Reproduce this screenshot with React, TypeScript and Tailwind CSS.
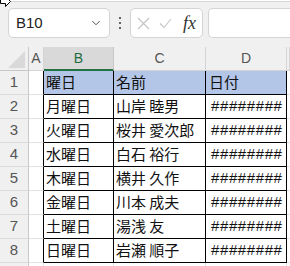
import { ChevronDown } from 'lucide-react'

const ROWS = [
  ['曜日', '名前', '日付'],
  ['月曜日', '山岸 睦男', '########'],
  ['火曜日', '桜井 愛次郎', '########'],
  ['水曜日', '白石 裕行', '########'],
  ['木曜日', '横井 久作', '########'],
  ['金曜日', '川本 成夫', '########'],
  ['土曜日', '湯浅 友', '########'],
  ['日曜日', '岩瀬 順子', '########'],
]

const jp = "font-['Noto_Sans_CJK_JP','Noto_Sans',sans-serif]"
const ui = "font-['Liberation_Sans','Noto_Sans',sans-serif]"

function Toolbar() {
  return (
    <div className="relative h-[47px] bg-[#f0f0f0]">
      <div className="h-[2px] border-b border-[#d6d6d6] bg-white" />
      {/* cursor */}
      <svg className="absolute left-0 top-[-4px]" width="12" height="11" viewBox="0 0 12 11">
        <path d="M0.5 3.5 H5.5 V0.5 L10.5 5.5 L5.5 10.5 V7.5 H0.5 Z" fill="white" stroke="black" strokeWidth="1" />
      </svg>
      <div className="flex items-center pt-[6px]">
        <div className={`ml-[8px] flex h-[30px] w-[102px] items-center justify-between rounded-[5px] border border-[#d4d4d4] bg-white pl-[7px] pr-[6px] text-[15px] text-[#222] ${ui}`}>
          <span>B10</span>
          <ChevronDown className="h-[14px] w-[14px] text-[#444]" strokeWidth={1.6} />
        </div>
        <div className="mx-[8px] flex w-[4px] flex-col items-center gap-[2.5px]">
          <span className="h-[2.5px] w-[2.5px] rounded-full bg-[#333]" />
          <span className="h-[2.5px] w-[2.5px] rounded-full bg-[#333]" />
          <span className="h-[2.5px] w-[2.5px] rounded-full bg-[#333]" />
        </div>
        <div className="flex h-[30px] w-[73px] items-center rounded-[5px] border border-[#d4d4d4] bg-white pl-[6px]">
          <svg width="13" height="13" viewBox="0 0 13 13" className="shrink-0">
            <path d="M1 1 L12 12 M12 1 L1 12" stroke="#c4c4c4" strokeWidth="1.1" fill="none" />
          </svg>
          <svg width="13" height="13" viewBox="0 0 13 13" className="ml-[9px] shrink-0">
            <path d="M1 6.5 L5 10.5 L12 2" stroke="#c4c4c4" strokeWidth="1.1" fill="none" />
          </svg>
          <span className="ml-[11px] font-['Liberation_Serif',serif] text-[18px] italic leading-none text-[#333]">fx</span>
        </div>
        <div className="ml-[5px] h-[30px] flex-1 rounded-l-[5px] border border-r-0 border-[#d4d4d4] bg-white" />
      </div>
    </div>
  )
}

export default function App() {
  return (
    <div className="h-[266px] w-[290px] overflow-hidden bg-[#f0f0f0]">
      <Toolbar />
      <div className="grid grid-cols-[29px_15px_70px_92px_81px_1fr] bg-white">
        {/* column header row */}
        <div className="relative h-[24px] border-b border-r border-[#c8c8c8] bg-[#f0f0f0]">
          <svg className="absolute bottom-[2px] right-[3px]" width="17" height="17" viewBox="0 0 17 17">
            <path d="M17 0 L17 17 L0 17 Z" fill="#d9d9d9" />
          </svg>
        </div>
        {['A', 'B', 'C', 'D', ''].map((c) => (
          <div
            key={c}
            className={`flex h-[24px] items-center justify-center border-r text-[14px] ${ui} ${
              c === 'B'
                ? 'border-b-2 border-r-[#c8c8c8] border-b-[#217346] bg-[#d9d9d9] text-[#1d6b3e]'
                : 'border-b border-[#d4d4d4] bg-[#f0f0f0] text-[#555]'
            }`}
          >
            {c}
          </div>
        ))}
        {ROWS.map((row, i) => (
          <Row key={i} n={i + 1} row={row} />
        ))}
        <div className="h-[24px] border-r border-[#c8c8c8] bg-[#f0f0f0]" />
        <div className="border-r border-[#e1e1e1]" />
        <div className="border-r border-[#e1e1e1]" />
        <div className="border-r border-[#e1e1e1]" />
        <div className="border-r border-[#e1e1e1]" />
        <div />
      </div>
    </div>
  )
}

function Row({ n, row }: { n: number; row: string[] }) {
  const head = n === 1
  return (
    <>
      <div className={`flex h-[24px] items-center justify-center border-b border-r border-b-[#dadada] border-r-[#c8c8c8] bg-[#f0f0f0] text-[15px] text-[#555] ${ui}`}>
        {n}
      </div>
      <div className="border-b border-r border-b-[#e1e1e1] border-r-black" />
      <div className={`flex h-[24px] items-center border-b border-r border-black pl-[2px] text-[15px] text-[#111] ${jp} ${head ? 'bg-[#b4c6e7]' : ''}`}>
        {row[0]}
      </div>
      <div className={`flex h-[24px] items-center whitespace-nowrap border-b border-r border-black pl-[2px] text-[15px] text-[#111] ${jp} ${head ? 'bg-[#b4c6e7]' : ''}`}>
        {row[1]}
      </div>
      <div
        className={`flex h-[24px] items-center whitespace-nowrap border-b border-r border-black text-[15px] text-[#111] ${
          head ? `bg-[#b4c6e7] pl-[3px] ${jp}` : `pl-[5px] ${ui} tracking-[0.6px]`
        }`}
      >
        {row[2]}
      </div>
      <div className="border-b border-[#e1e1e1]" />
    </>
  )
}
